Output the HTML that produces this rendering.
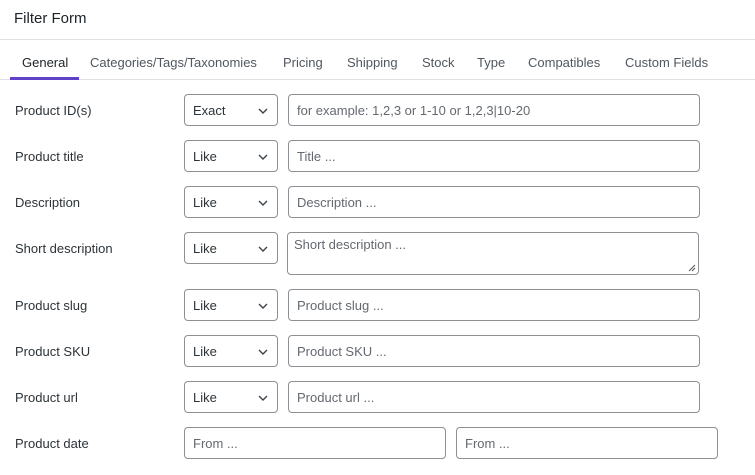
<!DOCTYPE html>
<html><head><style>
*{box-sizing:border-box;margin:0;padding:0}
body{width:755px;height:475px;background:#fff;font-family:"Liberation Sans",sans-serif;color:#1d2327;position:relative;overflow:hidden;font-size:13px}
.t{position:absolute;left:14px;top:10px;font-size:15px}
.hr{position:absolute;left:0;right:0;height:1px;background:#e0e0e0}
.tab{position:absolute;top:55px;font-size:13px;color:#50575e}
.lab{position:absolute;left:15px;font-size:13px;color:#2c3338}
.b{position:absolute;border:1px solid #8c8f94;border-radius:4px;font-size:13px;color:#2c3338;padding-left:8px;display:flex;align-items:center}
.ph{color:#646970}
.sel svg{position:absolute;right:9px;top:13px}
</style></head><body>
<div class="t">Filter Form</div>
<div class="hr" style="top:39px"></div>
<div class="hr" style="top:79px"></div>
<div style="position:absolute;left:10px;top:77px;width:69px;height:3px;background:#6042c9"></div>
<div class="tab" style="left:22px;color:#1d2327">General</div>
<div class="tab" style="left:90px">Categories/Tags/Taxonomies</div>
<div class="tab" style="left:283px">Pricing</div>
<div class="tab" style="left:347px">Shipping</div>
<div class="tab" style="left:422px">Stock</div>
<div class="tab" style="left:477px">Type</div>
<div class="tab" style="left:528px">Compatibles</div>
<div class="tab" style="left:625px">Custom Fields</div>

<div class="lab" style="top:103px">Product ID(s)</div>
<div class="b sel" style="left:184px;top:94px;width:94px;height:32px">Exact<svg width="10" height="7"><path d="M1 1l4 4 4-4" stroke="#3c434a" stroke-width="1.4" fill="none"/></svg></div>
<div class="b ph" style="left:288px;top:94px;width:412px;height:32px">for example: 1,2,3 or 1-10 or 1,2,3|10-20</div>

<div class="lab" style="top:149px">Product title</div>
<div class="b sel" style="left:184px;top:140px;width:94px;height:32px">Like<svg width="10" height="7"><path d="M1 1l4 4 4-4" stroke="#3c434a" stroke-width="1.4" fill="none"/></svg></div>
<div class="b ph" style="left:288px;top:140px;width:412px;height:32px">Title ...</div>

<div class="lab" style="top:195px">Description</div>
<div class="b sel" style="left:184px;top:186px;width:94px;height:32px">Like<svg width="10" height="7"><path d="M1 1l4 4 4-4" stroke="#3c434a" stroke-width="1.4" fill="none"/></svg></div>
<div class="b ph" style="left:288px;top:186px;width:412px;height:32px">Description ...</div>

<div class="lab" style="top:241px">Short description</div>
<div class="b sel" style="left:184px;top:232px;width:94px;height:32px">Like<svg width="10" height="7"><path d="M1 1l4 4 4-4" stroke="#3c434a" stroke-width="1.4" fill="none"/></svg></div>
<div class="b ph" style="left:287px;top:232px;width:412px;height:43px;align-items:flex-start;padding-top:4px;padding-left:6px">Short description ...<svg style="position:absolute;right:2px;bottom:2px" width="9" height="9"><path d="M8 2L2 8M8 5L5 8" stroke="#555" stroke-width="1"/></svg></div>

<div class="lab" style="top:298px">Product slug</div>
<div class="b sel" style="left:184px;top:289px;width:94px;height:32px">Like<svg width="10" height="7"><path d="M1 1l4 4 4-4" stroke="#3c434a" stroke-width="1.4" fill="none"/></svg></div>
<div class="b ph" style="left:288px;top:289px;width:412px;height:32px">Product slug ...</div>

<div class="lab" style="top:344px">Product SKU</div>
<div class="b sel" style="left:184px;top:335px;width:94px;height:32px">Like<svg width="10" height="7"><path d="M1 1l4 4 4-4" stroke="#3c434a" stroke-width="1.4" fill="none"/></svg></div>
<div class="b ph" style="left:288px;top:335px;width:412px;height:32px">Product SKU ...</div>

<div class="lab" style="top:390px">Product url</div>
<div class="b sel" style="left:184px;top:381px;width:94px;height:32px">Like<svg width="10" height="7"><path d="M1 1l4 4 4-4" stroke="#3c434a" stroke-width="1.4" fill="none"/></svg></div>
<div class="b ph" style="left:288px;top:381px;width:412px;height:32px">Product url ...</div>

<div class="lab" style="top:436px">Product date</div>
<div class="b ph" style="left:184px;top:427px;width:262px;height:32px">From ...</div>
<div class="b ph" style="left:456px;top:427px;width:262px;height:32px">From ...</div>
</body></html>
